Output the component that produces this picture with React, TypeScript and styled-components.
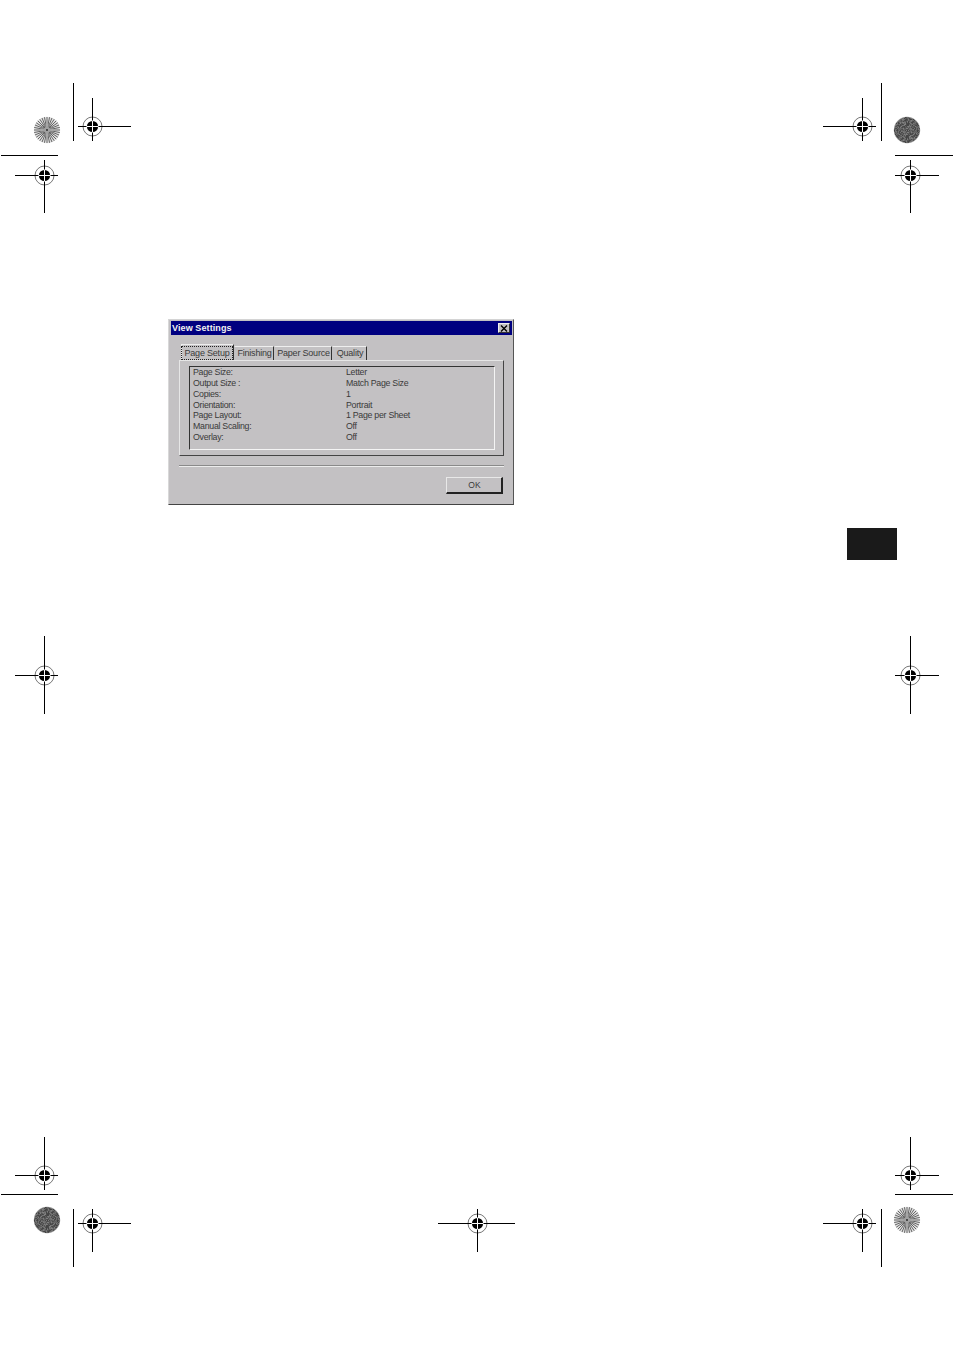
import React from 'react'
import styled, { createGlobalStyle } from 'styled-components'

const GlobalStyle = createGlobalStyle`
  html, body {
    margin: 0;
    padding: 0;
    background: #fff;
  }
`

const Page = styled.div`
  position: relative;
  width: 954px;
  height: 1350px;
  box-sizing: border-box;
  padding: 319px 0 0 168px;
  overflow: hidden;
  background: #fff;
  font-family: "Liberation Sans", Arial, sans-serif;
`

const Dialog = styled.div`
  box-sizing: border-box;
  width: 346px;
  height: 186px;
  padding: 1px 1px 0 2px;
  background: #c3c1c3;
  border: 1px solid;
  border-color: #d4d4d4 #555 #444 #d8d8d8;
`

const TitleBar = styled.div`
  display: flex;
  align-items: center;
  justify-content: space-between;
  height: 14px;
  padding: 0 2px 0 1px;
  background: #000080;
`

const TitleText = styled.span`
  color: #f2f2f2;
  font-size: 9px;
  font-weight: 700;
  letter-spacing: 0.1px;
`

const CloseButton = styled.div`
  display: flex;
  align-items: center;
  justify-content: center;
  box-sizing: border-box;
  width: 12px;
  height: 10px;
  background: #c3c1c3;
  border: 1px solid;
  border-color: #eee #333 #333 #eee;
`

const DialogBody = styled.div`
  padding: 9px 8px 0;
`

const TabRow = styled.div`
  display: flex;
  align-items: flex-end;
  height: 16px;
  padding-left: 2px;
`

const Tab = styled.div<{ $width: number; $active?: boolean }>`
  display: flex;
  align-items: center;
  justify-content: center;
  box-sizing: border-box;
  width: ${(p) => p.$width}px;
  height: ${(p) => (p.$active ? 16 : 14)}px;
  padding: ${(p) => (p.$active ? '0' : '0 0 2px 1px')};
  color: #3a3a3a;
  font-size: 9px;
  letter-spacing: -0.2px;
  white-space: nowrap;
  border-top: 1px solid #eee;
  border-left: 1px solid ${(p) => (p.$active ? '#eee' : 'transparent')};
  border-right: 1px solid #333;
`

const FocusLabel = styled.span`
  box-sizing: border-box;
  flex: none;
  width: 52px;
  height: 14px;
  margin-left: -1px;
  line-height: 14px;
  text-align: center;
  outline: 1px dotted #222;
  outline-offset: -1px;
`

const TabPanel = styled.div`
  box-sizing: border-box;
  height: 96px;
  padding: 5px 8px 5px 9px;
  border: 1px solid;
  border-color: #e6e6e6 #444 #444 #e6e6e6;
`

const SummaryBox = styled.div`
  display: grid;
  grid-template-columns: 153px 1fr;
  grid-auto-rows: 10.85px;
  align-items: center;
  box-sizing: border-box;
  height: 84px;
  padding-left: 3px;
  border: 1px solid;
  border-color: #333 #f4f4f4 #f4f4f4 #333;
`

const Cell = styled.span`
  color: #3a3a3a;
  font-size: 8.8px;
  line-height: 10.85px;
  letter-spacing: -0.28px;
  white-space: nowrap;
`

const Separator = styled.div`
  height: 0;
  margin-top: 9px;
  border-top: 1px solid #8a8a8a;
  border-bottom: 1px solid #ececec;
`

const Footer = styled.div`
  display: flex;
  justify-content: flex-end;
  padding: 10px 1px 0 0;
`

const OkButton = styled.div`
  display: flex;
  align-items: center;
  justify-content: center;
  box-sizing: border-box;
  width: 57px;
  height: 17px;
  padding-left: 1px;
  color: #3a3a3a;
  font-size: 8.5px;
  border-style: solid;
  border-width: 1px 2px 2px 1px;
  border-color: #e8e8e8 #222 #222 #e8e8e8;
`

// printer's marks: their place on the sheet is the content itself
const TabBlock = styled.div`
  position: absolute;
  left: 847px;
  top: 528px;
  width: 50px;
  height: 32px;
  background: #1a1a1a;
`

const TrimLine = styled.div<{ $x: number; $y: number; $w: number; $h: number }>`
  position: absolute;
  left: ${(p) => p.$x}px;
  top: ${(p) => p.$y}px;
  width: ${(p) => p.$w}px;
  height: ${(p) => p.$h}px;
  background: #000;
`

const MarkSvg = styled.svg<{ $x: number; $y: number; $w: number; $h: number }>`
  position: absolute;
  left: ${(p) => p.$x}px;
  top: ${(p) => p.$y}px;
  width: ${(p) => p.$w}px;
  height: ${(p) => p.$h}px;
`

interface RegMarkProps {
  x: number
  y: number
  left: number
  right: number
  top: number
  bottom: number
}

function RegMark({ x, y, left, right, top, bottom }: RegMarkProps) {
  const w = right - left
  const h = bottom - top
  const cx = x - left
  const cy = y - top
  return (
    <MarkSvg $x={left} $y={top} $w={w} $h={h} viewBox={`0 0 ${w} ${h}`}>
      <circle cx={cx} cy={cy} r={9.5} fill="none" stroke="#777" strokeWidth={1} />
      <circle cx={cx} cy={cy} r={5.6} fill="#000" />
      <path d={`M0 ${cy}H${w}M${cx} 0V${h}`} stroke="#000" strokeWidth={1} fill="none" />
      <path d={`M${cx - 6} ${cy}H${cx + 6}M${cx} ${cy - 6}V${cy + 6}`} stroke="#fff" strokeWidth={1} fill="none" />
    </MarkSvg>
  )
}

function SpokeDisk({ x, y }: { x: number; y: number }) {
  const spokes = Array.from({ length: 32 }, (_, i) => (i / 32) * Math.PI * 2)
  return (
    <MarkSvg $x={x - 14} $y={y - 14} $w={28} $h={28} viewBox="-14 -14 28 28">
      <circle r={13.2} fill="#e2e2e2" />
      {spokes.map((a, i) => (
        <line
          key={i}
          x1={Math.cos(a) * 1.5}
          y1={Math.sin(a) * 1.5}
          x2={Math.cos(a) * 13}
          y2={Math.sin(a) * 13}
          stroke="#555"
          strokeWidth={0.9}
        />
      ))}
      <path d="M0 -9L2 -2L9 0L2 2L0 9L-2 2L-9 0L-2 -2Z" fill="#b0b0b0" opacity={0.8} />
      <circle r={1} fill="#222" />
    </MarkSvg>
  )
}

// mottled grey, the spokes of this disk print too close to resolve
function SpeckleDisk({ x, y }: { x: number; y: number }) {
  const dots: { px: number; py: number; g: number }[] = []
  for (let py = -13; py < 13; py++) {
    for (let px = -13; px < 13; px++) {
      if (Math.hypot(px + 0.5, py + 0.5) > 12.6) continue
      const n = Math.abs(Math.sin(px * 12.9898 + py * 78.233) * 43758.5453) % 1
      dots.push({ px, py, g: Math.round(65 + n * 65) })
    }
  }
  return (
    <MarkSvg $x={x - 14} $y={y - 14} $w={28} $h={28} viewBox="-14 -14 28 28">
      <circle r={13.2} fill="#8c8c8c" />
      {dots.map((d) => (
        <rect key={`${d.px}-${d.py}`} x={d.px} y={d.py} width={1} height={1} fill={`rgb(${d.g},${d.g},${d.g})`} />
      ))}
    </MarkSvg>
  )
}

const rows = [
  ['Page Size:', 'Letter'],
  ['Output Size :', 'Match Page Size'],
  ['Copies:', '1'],
  ['Orientation:', 'Portrait'],
  ['Page Layout:', '1 Page per Sheet'],
  ['Manual Scaling:', 'Off'],
  ['Overlay:', 'Off'],
]

const regMarks: RegMarkProps[] = [
  { x: 92.5, y: 126.5, left: 78, right: 131, top: 98, bottom: 141 },
  { x: 44.5, y: 175.5, left: 15, right: 58, top: 160, bottom: 213 },
  { x: 862.5, y: 126.5, left: 823, right: 876, top: 98, bottom: 141 },
  { x: 910.5, y: 175.5, left: 895, right: 939, top: 160, bottom: 213 },
  { x: 44.5, y: 675.5, left: 15, right: 58, top: 636, bottom: 714 },
  { x: 910.5, y: 675.5, left: 895, right: 939, top: 636, bottom: 714 },
  { x: 44.5, y: 1175.5, left: 15, right: 58, top: 1137, bottom: 1190 },
  { x: 910.5, y: 1175.5, left: 895, right: 939, top: 1137, bottom: 1190 },
  { x: 92.5, y: 1223.5, left: 78, right: 131, top: 1209, bottom: 1252 },
  { x: 477.5, y: 1223.5, left: 438, right: 515, top: 1209, bottom: 1252 },
  { x: 862.5, y: 1223.5, left: 823, right: 876, top: 1209, bottom: 1252 },
]

const trimLines = [
  { x: 73, y: 83, w: 1, h: 58 },
  { x: 881, y: 83, w: 1, h: 58 },
  { x: 1, y: 155, w: 57, h: 1 },
  { x: 895, y: 155, w: 58, h: 1 },
  { x: 1, y: 1194, w: 57, h: 1 },
  { x: 895, y: 1194, w: 58, h: 1 },
  { x: 73, y: 1209, w: 1, h: 58 },
  { x: 881, y: 1209, w: 1, h: 58 },
]

export default function App() {
  return (
    <Page>
      <GlobalStyle />
      <Dialog>
        <TitleBar>
          <TitleText>View Settings</TitleText>
          <CloseButton>
            <svg width="8" height="7" viewBox="0 0 8 7">
              <path d="M1 0.5L7 6.5M7 0.5L1 6.5" stroke="#000" strokeWidth="1.4" fill="none" />
            </svg>
          </CloseButton>
        </TitleBar>
        <DialogBody>
          <TabRow>
            <Tab $width={53} $active>
              <FocusLabel>Page Setup</FocusLabel>
            </Tab>
            <Tab $width={40}>Finishing</Tab>
            <Tab $width={58}>Paper Source</Tab>
            <Tab $width={35}>Quality</Tab>
          </TabRow>
          <TabPanel>
            <SummaryBox>
              {rows.map(([label, value]) => (
                <React.Fragment key={label}>
                  <Cell>{label}</Cell>
                  <Cell>{value}</Cell>
                </React.Fragment>
              ))}
            </SummaryBox>
          </TabPanel>
          <Separator />
          <Footer>
            <OkButton>OK</OkButton>
          </Footer>
        </DialogBody>
      </Dialog>

      <TabBlock />
      {trimLines.map((l) => (
        <TrimLine key={`${l.x}-${l.y}`} $x={l.x} $y={l.y} $w={l.w} $h={l.h} />
      ))}
      {regMarks.map((m) => (
        <RegMark key={`${m.x}-${m.y}`} {...m} />
      ))}
      <SpokeDisk x={47} y={130} />
      <SpeckleDisk x={907} y={130} />
      <SpeckleDisk x={47} y={1220} />
      <SpokeDisk x={907} y={1220} />
    </Page>
  )
}
